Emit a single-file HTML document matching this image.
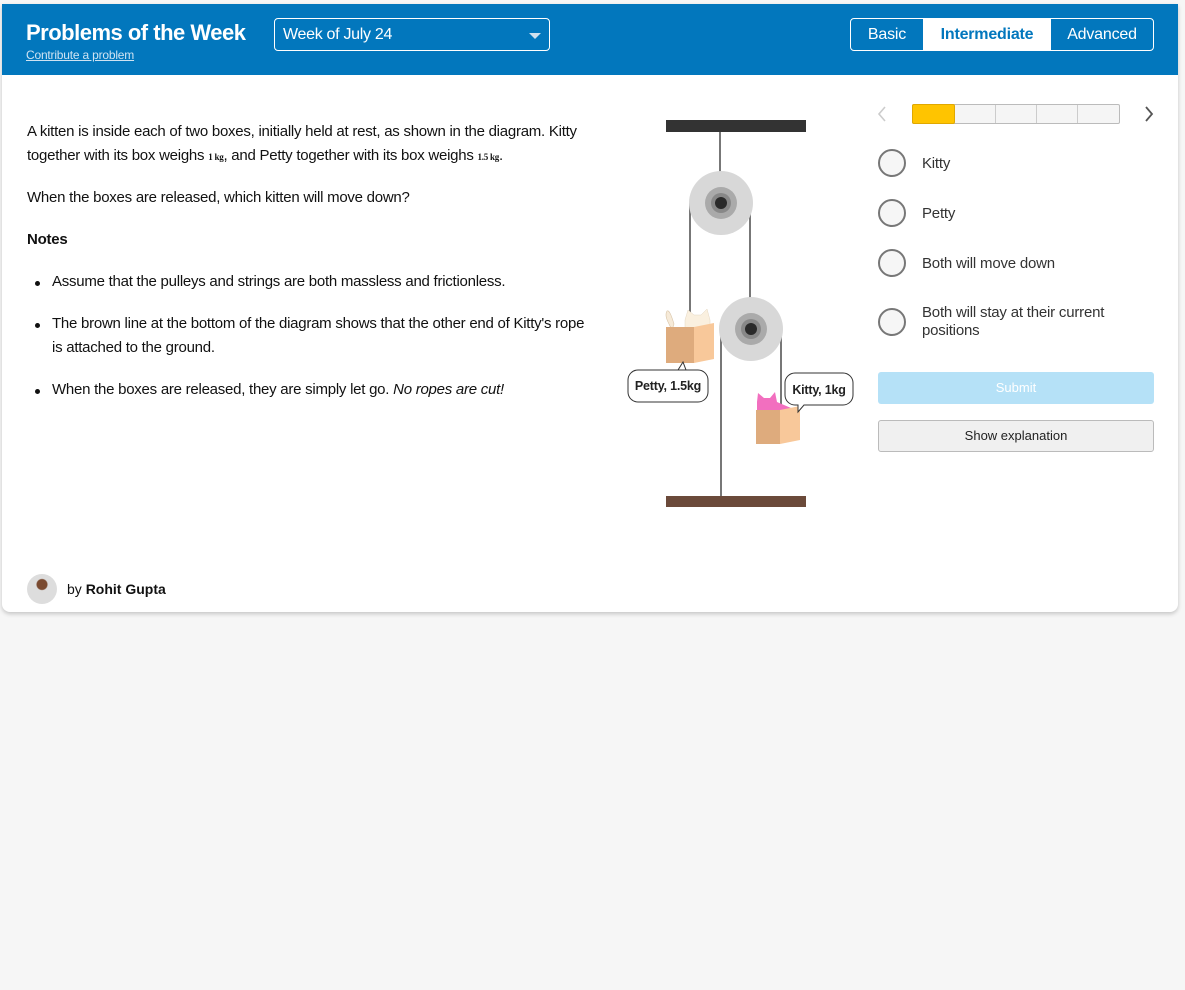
<!DOCTYPE html>
<html><head><meta charset="utf-8"><style>
*{box-sizing:border-box;margin:0;padding:0}
body{width:1185px;height:990px;background:#f6f6f6;font-family:"Liberation Sans",Arial,sans-serif;position:relative;overflow:hidden;color:#111}
.card{position:absolute;left:2px;top:4px;width:1176px;height:608px;background:#fff;border-radius:0 0 8px 8px;box-shadow:0 2px 4px rgba(0,0,0,.2);overflow:hidden}
.hdr{position:absolute;left:0;top:0;width:1176px;height:71px;background:#0277bd}
.a{position:absolute;white-space:nowrap}
.t{font-size:15px;line-height:24px;color:#111;letter-spacing:-0.25px}
.opt{font-size:15px;color:#333;letter-spacing:-0.2px}
.rad{position:absolute;width:28px;height:28px;border:2px solid #777;border-radius:50%;background:#f6f6f6}
</style></head><body>
<div class="card">
 <div class="hdr">
  <div class="a" style="left:24px;top:16px;font-size:22px;font-weight:bold;color:#fff;letter-spacing:-0.5px">Problems of the Week</div>
  <div class="a" style="left:24px;top:44px;font-size:12px;color:#cfe3f2;text-decoration:underline;letter-spacing:-0.2px">Contribute a problem</div>
  <div class="a" style="left:272px;top:14px;width:276px;height:33px;border:1px solid #fff;border-radius:4px;color:#fff;font-size:16px;padding:7px 8px;letter-spacing:-0.3px">Week of July 24
   <span style="position:absolute;right:8px;top:14px;width:0;height:0;border-left:6px solid transparent;border-right:6px solid transparent;border-top:6px solid #cfe0ee"></span></div>
  <div class="a" style="left:848px;top:14px;width:304px;height:33px;border:1px solid #fff;border-radius:4px;overflow:hidden;font-size:16px;color:#fff;letter-spacing:-0.2px">
   <span class="a" style="left:0;top:0;width:72px;height:31px;text-align:center;line-height:31px">Basic</span>
   <span class="a" style="left:72px;top:0;width:128px;height:31px;background:#fff;color:#0277bd;font-weight:bold;text-align:center;line-height:31px">Intermediate</span>
   <span class="a" style="left:200px;top:0;width:102px;height:31px;text-align:center;line-height:31px">Advanced</span>
  </div>
 </div>
 <div class="a t" style="left:25px;top:116px">A kitten is inside each of two boxes, initially held at rest, as shown in the diagram. Kitty</div>
 <div class="a t" style="left:25px;top:140px">together with its box weighs <span style="font-family:'Liberation Serif',serif;font-size:9px;font-weight:bold">1 kg</span>, and Petty together with its box weighs <span style="font-family:'Liberation Serif',serif;font-size:9px;font-weight:bold">1.5 kg</span>.</div>
 <div class="a t" style="left:25px;top:182px">When the boxes are released, which kitten will move down?</div>
 <div class="a t" style="left:25px;top:224px;font-weight:bold">Notes</div>
 <div class="a" style="left:33px;top:277px;width:5px;height:5px;border-radius:50%;background:#111"></div>
 <div class="a t" style="left:50px;top:266px">Assume that the pulleys and strings are both massless and frictionless.</div>
 <div class="a" style="left:33px;top:319px;width:5px;height:5px;border-radius:50%;background:#111"></div>
 <div class="a t" style="left:50px;top:308px">The brown line at the bottom of the diagram shows that the other end of Kitty's rope</div>
 <div class="a t" style="left:50px;top:332px">is attached to the ground.</div>
 <div class="a" style="left:33px;top:385px;width:5px;height:5px;border-radius:50%;background:#111"></div>
 <div class="a t" style="left:50px;top:374px">When the boxes are released, they are simply let go. <i>No ropes are cut!</i></div>

 <svg class="a" style="left:618px;top:96px" width="250" height="420" viewBox="620 100 250 420">
  <rect x="666" y="120" width="140" height="12" fill="#333"/>
  <line x1="720" y1="132" x2="720" y2="175" stroke="#777" stroke-width="2"/>
  <line x1="690" y1="203" x2="690" y2="335" stroke="#777" stroke-width="2"/>
  <line x1="750" y1="203" x2="750" y2="298" stroke="#777" stroke-width="2"/>
  <line x1="721" y1="330" x2="721" y2="497" stroke="#777" stroke-width="2"/>
  <line x1="781" y1="330" x2="781" y2="410" stroke="#777" stroke-width="2"/>
  <circle cx="721" cy="203" r="32" fill="#d8d8d8"/><circle cx="721" cy="203" r="16" fill="#aaa"/><circle cx="721" cy="203" r="10" fill="#888"/><circle cx="721" cy="203" r="6" fill="#2a2a2a"/>
  <circle cx="751" cy="329" r="32" fill="#d8d8d8"/><circle cx="751" cy="329" r="16" fill="#aaa"/><circle cx="751" cy="329" r="10" fill="#888"/><circle cx="751" cy="329" r="6" fill="#2a2a2a"/>
  <path d="M672 330 C668 322 664 316 667 311 C669 310 671 314 674 324z" fill="#f6ead8" stroke="#d8c4a8" stroke-width=".6"/>
  <path d="M685 330 v-10 l3 -10 l6 5 h7 l6 -6 l3 11 v10z" fill="#faf0df" stroke="#e4d6c0" stroke-width=".5"/>
  <rect x="666" y="327" width="28" height="36" fill="#deab7d"/><path d="M694 327 l20 -4 v36 l-20 4z" fill="#f8c89a"/>
  <path d="M757 412 v-10 l1 -9 l6 5 h6 l5 -6 l2 10 l14 6 l8 4z" fill="#f26fbf"/>
  <rect x="756" y="410" width="24" height="34" fill="#deab7d"/><path d="M780 410 l20 -4 v34 l-20 4z" fill="#f8c89a"/>
  <path d="M640 370 h58 a10 10 0 0 1 10 10 v12 a10 10 0 0 1 -10 10 h-60 a10 10 0 0 1 -10 -10 v-12 a10 10 0 0 1 10 -10 h40 l5 -8 l3 8z" fill="#fff" stroke="#333" stroke-width="1"/>
  <text x="668" y="390" font-size="12.5" text-anchor="middle" fill="#222" font-family="Liberation Sans" font-weight="bold" letter-spacing="-0.2">Petty, 1.5kg</text>
  <path d="M795 373 h48 a10 10 0 0 1 10 10 v12 a10 10 0 0 1 -10 10 h-39 l-6 7 l0 -7 h-3 a10 10 0 0 1 -10 -10 v-12 a10 10 0 0 1 10 -10z" fill="#fff" stroke="#333" stroke-width="1"/>
  <text x="819" y="394" font-size="12.5" text-anchor="middle" fill="#222" font-family="Liberation Sans" font-weight="bold" letter-spacing="-0.2">Kitty, 1kg</text>
  <rect x="666" y="496" width="140" height="11" fill="#6b4a3a"/>
 </svg>

 <svg class="a" style="left:874px;top:100px" width="12" height="20"><path d="M9 3 L3 10 L9 17" fill="none" stroke="#ccc" stroke-width="1.6"/></svg>
 <svg class="a" style="left:1141px;top:100px" width="12" height="20"><path d="M3 3 L9 10 L3 17" fill="none" stroke="#555" stroke-width="1.8"/></svg>
 <div class="a" style="left:910px;top:100px;width:208px;height:20px;border:1px solid #bbb;border-radius:2px;background:#f5f5f5">
  <div class="a" style="left:-1px;top:-1px;width:43px;height:20px;background:#ffc400;border:1px solid #e0a800;border-radius:2px"></div>
  <div class="a" style="left:82px;top:0;width:1px;height:18px;background:#ccc"></div>
  <div class="a" style="left:123px;top:0;width:1px;height:18px;background:#ccc"></div>
  <div class="a" style="left:164px;top:0;width:1px;height:18px;background:#ccc"></div>
 </div>
 <div class="rad" style="left:876px;top:145px"></div><div class="a opt" style="left:920px;top:151px">Kitty</div>
 <div class="rad" style="left:876px;top:195px"></div><div class="a opt" style="left:920px;top:201px">Petty</div>
 <div class="rad" style="left:876px;top:245px"></div><div class="a opt" style="left:920px;top:251px">Both will move down</div>
 <div class="rad" style="left:876px;top:304px"></div><div class="a opt" style="left:920px;top:300px;line-height:18px">Both will stay at their current<br>positions</div>
 <div class="a" style="left:876px;top:368px;width:276px;height:32px;background:#b5e1f7;border-radius:3px;color:#fff;font-size:13px;text-align:center;line-height:32px">Submit</div>
 <div class="a" style="left:876px;top:416px;width:276px;height:32px;background:#f0f0f0;border:1px solid #bbb;border-radius:3px;color:#222;font-size:13px;text-align:center;line-height:30px">Show explanation</div>

 <div class="a" style="left:25px;top:570px;width:30px;height:30px;border-radius:50%;background:radial-gradient(circle at 50% 35%,#7a4a30 0 5px,#ddd 6px)"></div>
 <div class="a" style="left:65px;top:577px;font-size:14px;color:#111">by <b>Rohit Gupta</b></div>
</div>
</body></html>
